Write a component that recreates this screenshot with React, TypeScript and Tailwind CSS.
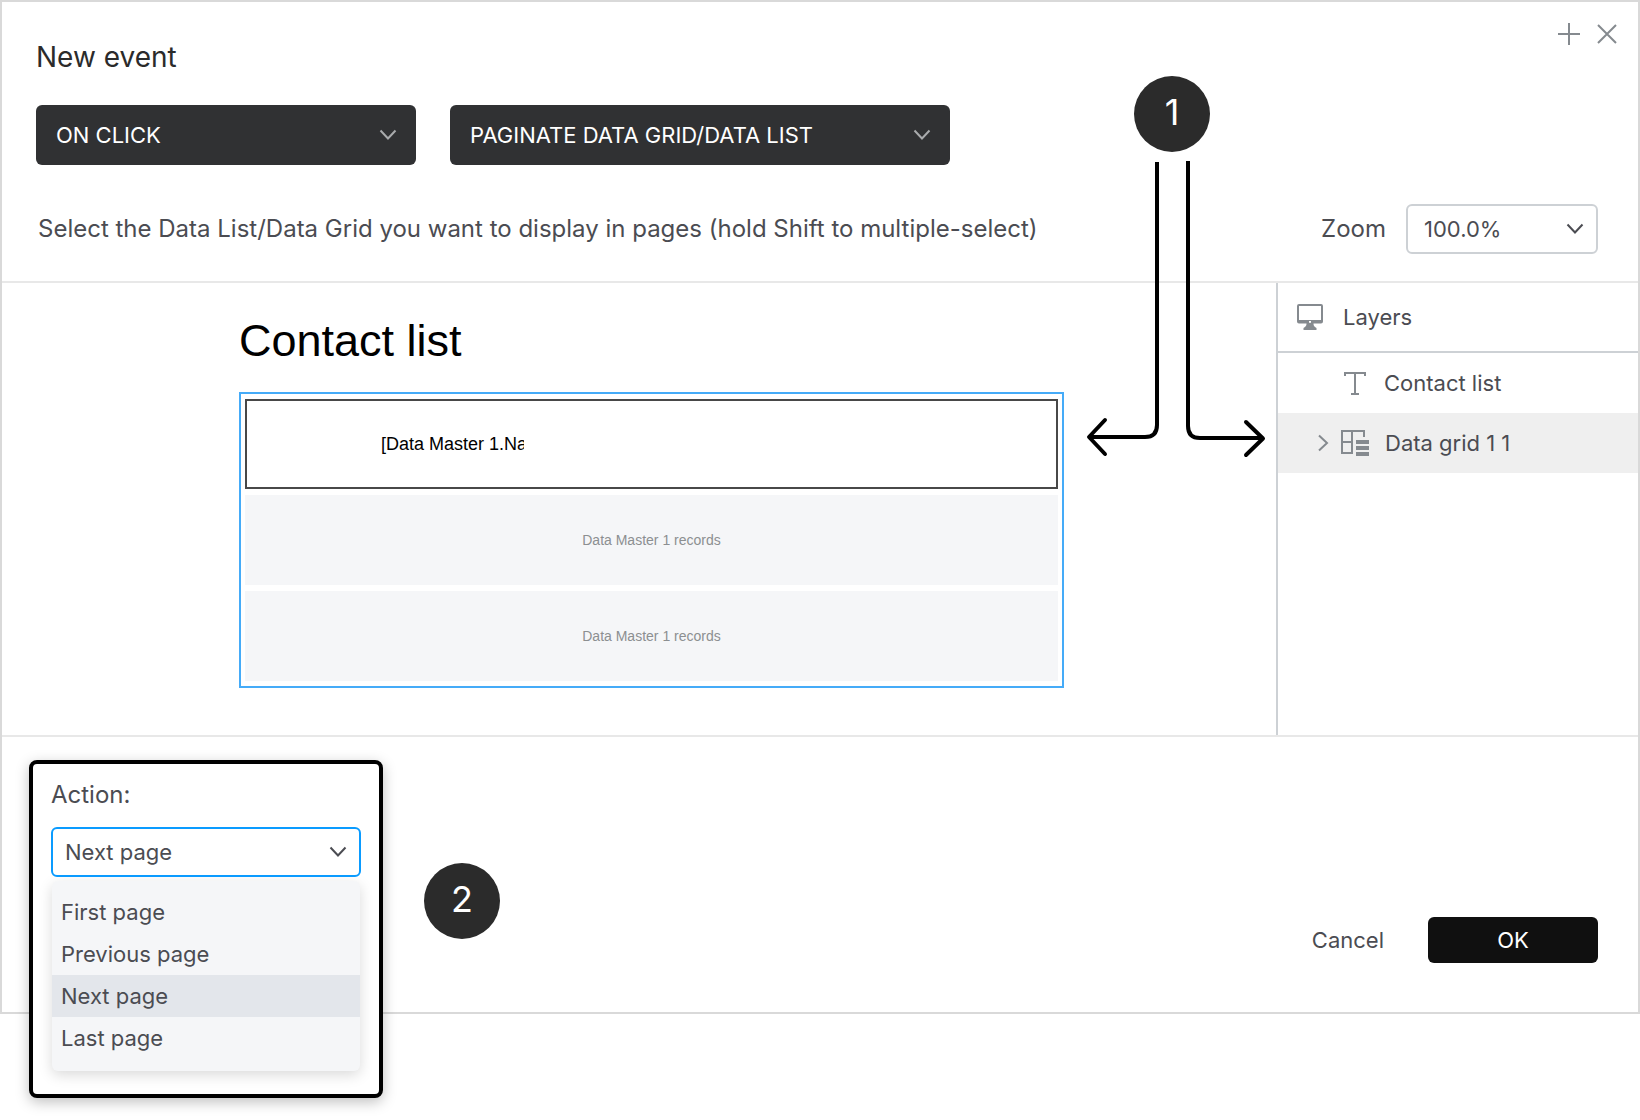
import { useState, type ReactNode } from "react";
import clsx from "clsx";

const ACTIONS = ["First page", "Previous page", "Next page", "Last page"];
const RECORD_ROWS = [1, 2];

function ChevronDown({ className }: { className?: string }) {
  return (
    <svg
      className={clsx("pointer-events-none h-3 w-[18px]", className)}
      viewBox="0 0 18 12"
      fill="none"
      stroke="currentColor"
      strokeWidth="2"
      aria-hidden="true"
    >
      <path d="M1.5 1.5 9 9.5l7.5-8" />
    </svg>
  );
}

interface SelectBoxProps {
  id: string;
  value: string;
  options: string[];
  onChange?: (value: string) => void;
  label?: string;
  className: string;
  chevronClassName: string;
}

function SelectBox({ id, value, options, onChange, label, className, chevronClassName }: SelectBoxProps) {
  return (
    <div className="grid items-center">
      <select
        id={id}
        aria-label={label}
        value={value}
        onChange={(e) => onChange?.(e.target.value)}
        className={clsx("col-start-1 row-start-1 appearance-none outline-none", className)}
      >
        {options.map((option) => (
          <option key={option}>{option}</option>
        ))}
      </select>
      <ChevronDown className={clsx("col-start-1 row-start-1 justify-self-end", chevronClassName)} />
    </div>
  );
}

function StepBadge({ children }: { children: ReactNode }) {
  return (
    <span className="flex size-[76px] shrink-0 items-center justify-center rounded-full bg-[#2b2b2b] pb-1 text-4xl text-white">
      {children}
    </span>
  );
}

function MonitorIcon() {
  return (
    <svg className="h-[26px] w-[26px]" viewBox="0 0 26 26" aria-hidden="true">
      <path
        fill="#858a8f"
        fillRule="evenodd"
        d="M2 0h22a2 2 0 0 1 2 2v15.500a2 2 0 0 1-2 2h-7.500c0 2 .6 3.300 3 4.500V26h-13v-2c2.400-1.200 3-2.500 3-4.500H2a2 2 0 0 1-2-2V2a2 2 0 0 1 2-2ZM2 2v14h22V2H2Zm10 15v1.800h2V17h-2Z"
      />
    </svg>
  );
}

function TextIcon() {
  return (
    <svg className="h-6 w-[22px]" viewBox="0 0 22 24" fill="none" stroke="#858a8f" strokeWidth="2" aria-hidden="true">
      <path d="M1 5V2h20v3M11 2v20M7 23h8" />
    </svg>
  );
}

function DataGridIcon() {
  return (
    <svg className="h-[26px] w-7" viewBox="0 0 28 26" aria-hidden="true">
      <path fill="none" stroke="#858a8f" strokeWidth="2" d="M23 7V1H1v22h10V1M1 12h10" />
      <path fill="#858a8f" d="M15 10h13v4H15zM15 16h13v4H15zM15 22h13v4H15z" />
    </svg>
  );
}

export default function App() {
  const [trigger, setTrigger] = useState("ON CLICK");
  const [event, setEvent] = useState("PAGINATE DATA GRID/DATA LIST");
  const [zoom, setZoom] = useState("100.0%");
  const [action, setAction] = useState("Next page");

  return (
    <main className="min-h-screen bg-white font-['Inter',sans-serif] text-[22px] text-[#4b4c52]">
      <section className="relative border-2 border-[#d9d9d9]">
        {/* Header */}
        <header className="border-b-2 border-[#e8e8e8] pb-[27px]">
          <div className="flex items-start justify-between pt-[21px] pr-5 pl-[34px]">
            <h1 className="pt-4 text-[28px] leading-9 text-[#2b2b2b]">New event</h1>
            <div className="flex gap-4 text-[#858a8f]">
              <button type="button" aria-label="Add event">
                <svg className="size-[22px]" viewBox="0 0 22 22" stroke="currentColor" strokeWidth="2">
                  <path d="M0 11h22M11 0v22" />
                </svg>
              </button>
              <button type="button" aria-label="Close">
                <svg className="size-[22px]" viewBox="0 0 22 22" stroke="currentColor" strokeWidth="2">
                  <path d="m2 2 18 18M20 2 2 20" />
                </svg>
              </button>
            </div>
          </div>

          <div className="mt-[30px] flex gap-[34px] pl-[34px]">
            <SelectBox
              id="trigger"
              label="Trigger"
              value={trigger}
              options={["ON CLICK"]}
              onChange={setTrigger}
              className="h-[60px] w-[380px] rounded-md bg-[#303133] px-5 text-white"
              chevronClassName="mr-[19px] text-[#a9abad]"
            />
            <SelectBox
              id="event"
              label="Event"
              value={event}
              options={["PAGINATE DATA GRID/DATA LIST"]}
              onChange={setEvent}
              className="h-[60px] w-[500px] rounded-md bg-[#303133] px-5 text-white"
              chevronClassName="mr-[19px] text-[#a9abad]"
            />
          </div>

          <div className="mt-[39px] flex items-center pr-10 pl-9">
            <p className="text-2xl">
              Select the Data List/Data Grid you want to display in pages (hold Shift to multiple-select)
            </p>
            <label htmlFor="zoom" className="mr-5 ml-auto text-2xl">
              Zoom
            </label>
            <SelectBox
              id="zoom"
              value={zoom}
              options={["100.0%"]}
              onChange={setZoom}
              className="h-[50px] w-48 rounded-md border-2 border-[#cdd1d5] bg-white px-4"
              chevronClassName="mr-[14px]"
            />
          </div>
        </header>

        {/* Canvas and layers */}
        <div className="flex border-b-2 border-[#e8e8e8]">
          <div className="flex-1 pt-[33px] pr-[212px] pb-[47px] pl-[237px] font-['Liberation_Sans',Arial,sans-serif]">
            <h2 className="text-[45px] leading-[50px] text-black">Contact list</h2>
            <div className="mt-[26px] flex flex-col gap-[6px] border-2 border-[#45abf8] px-1 py-[5px]">
              <div className="flex h-[90px] items-center border-2 border-[#484848] pl-[134px]">
                <span className="w-[143px] overflow-hidden text-lg whitespace-nowrap text-black">
                  [Data Master 1.Name]
                </span>
              </div>
              {RECORD_ROWS.map((row) => (
                <div key={row} className="flex h-[90px] items-center justify-center bg-[#f5f6f8] text-sm text-[#8c8f91]">
                  Data Master 1 records
                </div>
              ))}
            </div>
          </div>

          <aside className="w-[362px] border-l-2 border-[#cdd1d5]">
            <div className="flex h-[70px] items-center gap-5 border-b-2 border-[#cdd1d5] pl-[19px]">
              <MonitorIcon />
              <h3>Layers</h3>
            </div>
            <ul>
              <li className="flex h-[60px] items-center gap-[18px] pl-[66px]">
                <TextIcon />
                Contact list
              </li>
              <li className="flex h-[60px] items-center bg-[#efefef] pl-[39px]">
                <button type="button" aria-label="Expand Data grid 1 1" className="mr-3">
                  <svg className="h-[18px] w-3" viewBox="0 0 12 18" fill="none" stroke="#858a8f" strokeWidth="2">
                    <path d="m2 1.500 8 7.500-8 7.500" />
                  </svg>
                </button>
                <DataGridIcon />
                <span className="ml-4">Data grid 1 1</span>
              </li>
            </ul>
          </aside>
        </div>

        {/* Footer */}
        <footer className="flex items-start pr-10 pb-[49px] pl-[27px]">
          <div className="mt-[23px] -mb-36 w-[354px] rounded-lg border-4 border-black bg-white px-[18px] pt-[15px] pb-[23px] shadow-[0_4px_14px_rgba(0,0,0,0.25)]">
            <label htmlFor="action" className="block text-2xl leading-8">
              Action:
            </label>
            <div className="mt-4">
              <SelectBox
                id="action"
                value={action}
                options={ACTIONS}
                onChange={setAction}
                className="h-[50px] w-full rounded-md border-2 border-[#0a9bff] bg-white px-3"
                chevronClassName="mr-[14px]"
              />
              <ul className="mx-px mt-1 rounded-md bg-[#f5f6f8] pt-[10px] pb-3 shadow-[0_4px_14px_rgba(0,0,0,0.15)]">
                {ACTIONS.map((item) => (
                  <li key={item}>
                    <button
                      type="button"
                      onClick={() => setAction(item)}
                      className={clsx("h-[42px] w-full px-[9px] text-left", item === action && "bg-[#e3e6eb]")}
                    >
                      {item}
                    </button>
                  </li>
                ))}
              </ul>
            </div>
          </div>

          <div className="mt-[126px] ml-[41px]">
            <StepBadge>2</StepBadge>
          </div>

          <div className="mt-[180px] ml-auto flex items-center gap-11">
            <button type="button">Cancel</button>
            <button type="button" className="h-[46px] w-[170px] rounded-md bg-[#101010] text-white">
              OK
            </button>
          </div>
        </footer>

        {/* Callout pointing at the canvas and the layers panel */}
        <div className="pointer-events-none absolute top-[74px] right-[372px] flex w-[188px] flex-col items-center">
          <StepBadge>1</StepBadge>
          <svg
            className="h-[310px] w-[188px]"
            viewBox="0 0 188 310"
            fill="none"
            stroke="#000"
            strokeWidth="4"
            aria-hidden="true"
          >
            <path d="M79 10v263q0 12-12 12H12" />
            <path d="M110 9v265q0 12 12 12h62" />
            <path strokeLinecap="round" strokeLinejoin="round" d="m27 268-16 17 16 17M168 270l17 16.500-17 16.500" />
          </svg>
        </div>
      </section>
    </main>
  );
}
